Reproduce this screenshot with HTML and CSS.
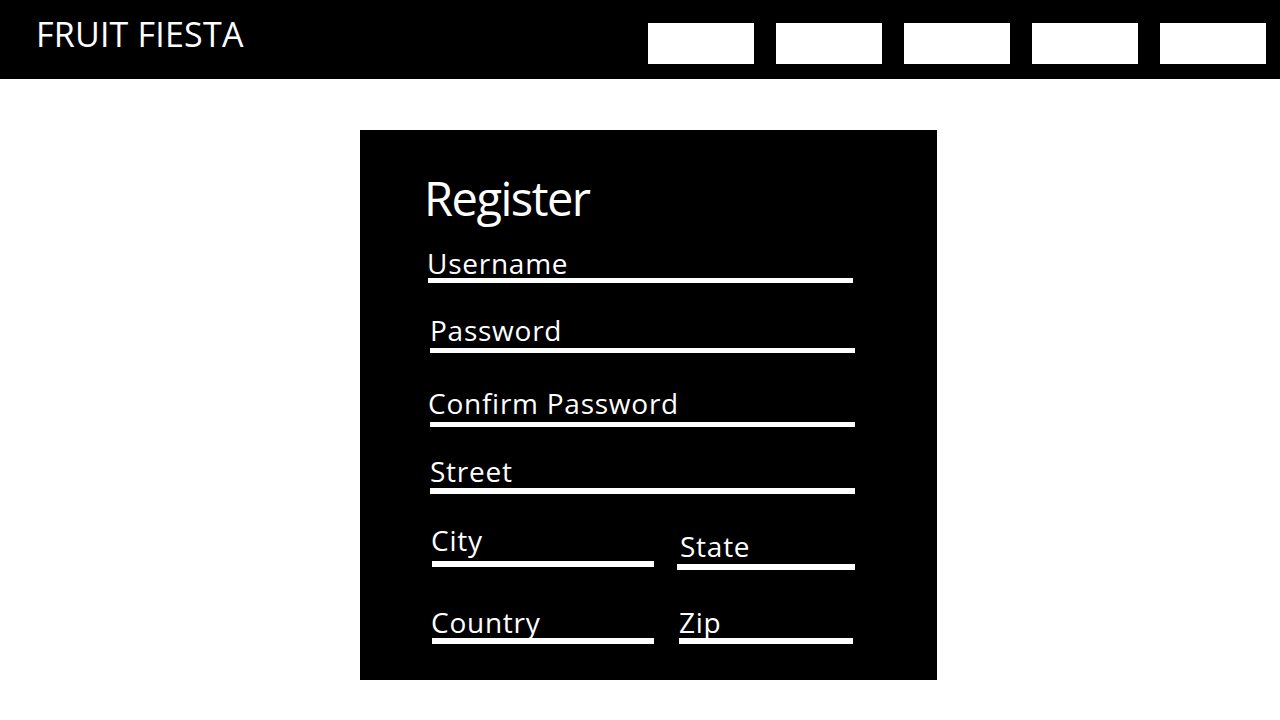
FILE: index.html
```html
<!DOCTYPE html>
<html lang="en">
<head>
<meta charset="utf-8">
<title>Fruit Fiesta - Register</title>
<link rel="stylesheet" href="styles.css">
</head>
<body>
<header class="topbar">
  <div class="logo">FRUIT FIESTA</div>
  <nav class="nav">
    <a class="nav-item" href="#"></a>
    <a class="nav-item" href="#"></a>
    <a class="nav-item" href="#"></a>
    <a class="nav-item" href="#"></a>
    <a class="nav-item" href="#"></a>
  </nav>
</header>
<main class="main">
  <section class="card">
    <h1 class="title">Register</h1>
    <div class="field f-user">
      <div class="label">Username</div>
      <div class="bar"></div>
    </div>
    <div class="field f-pass">
      <div class="label">Password</div>
      <div class="bar"></div>
    </div>
    <div class="field f-confirm">
      <div class="label">Confirm Password</div>
      <div class="bar"></div>
    </div>
    <div class="field f-street">
      <div class="label">Street</div>
      <div class="bar"></div>
    </div>
    <div class="row r-1">
      <div class="field f-city">
        <div class="label">City</div>
        <div class="bar"></div>
      </div>
      <div class="field f-state">
        <div class="label">State</div>
        <div class="bar"></div>
      </div>
    </div>
    <div class="row r-2">
      <div class="field f-country">
        <div class="label">Country</div>
        <div class="bar"></div>
      </div>
      <div class="field f-zip">
        <div class="label">Zip</div>
        <div class="bar"></div>
      </div>
    </div>
  </section>
</main>
</body>
</html>
```
FILE: styles.css
```css
* { box-sizing: border-box; }
html, body { margin: 0; padding: 0; }
body {
  background: #ffffff;
  font-family: "Open Sans", "Noto Sans", sans-serif;
  color: #ffffff;
}
.topbar {
  height: 79px;
  background: #000000;
  display: flex;
  justify-content: space-between;
  align-items: flex-start;
  padding: 0 14px 0 36px;
}
.logo {
  margin-top: 17px;
  font-size: 34px;
  line-height: 34px;
  letter-spacing: 0.2px;
}
.nav {
  margin-top: 23px;
  display: flex;
  gap: 22px;
}
.nav-item {
  display: block;
  width: 106px;
  height: 41px;
  background: #ffffff;
}
.main { padding-top: 51px; }
.card {
  margin-left: 360px;
  width: 577px;
  height: 550px;
  background: #000000;
  padding: 45px 0 0 64px;
}
.title {
  margin: 0;
  font-weight: 400;
  font-size: 47px;
  line-height: 47px;
  letter-spacing: -1.5px;
}
.label {
  font-size: 28px;
  line-height: 28px;
  letter-spacing: 0.75px;
  white-space: nowrap;
}
.bar { background: #ffffff; height: 5px; }

.f-user { margin-top: 27px; padding-left: 3px; }
.f-user .bar { margin-top: 1px; margin-left: 1px; width: 425px; }

.f-pass { margin-top: 33px; padding-left: 6px; }
.f-pass .bar { margin-top: 4px; width: 425px; }

.f-confirm { margin-top: 36px; padding-left: 4px; }
.f-confirm .bar { margin-top: 5px; margin-left: 2px; width: 425px; }

.f-street { margin-top: 30px; padding-left: 6px; }
.f-street .bar { margin-top: 3px; width: 425px; height: 6px; }

.row { display: flex; align-items: flex-start; }
.r-1 { margin-top: 32px; }
.r-2 { margin-top: 38px; }

.f-city { padding-left: 7px; }
.f-city .bar { margin-top: 7px; margin-left: 1px; width: 222px; height: 6px; }

.f-state { margin-top: 6px; margin-left: 23px; }
.f-state .label { padding-left: 3px; }
.f-state .bar { margin-top: 4px; width: 178px; height: 6px; }

.f-country { padding-left: 7px; }
.f-country .bar { margin-top: 2px; margin-left: 1px; width: 222px; height: 6px; }

.f-zip { margin-left: 25px; }
.f-zip .bar { margin-top: 2px; width: 174px; height: 6px; }
```
